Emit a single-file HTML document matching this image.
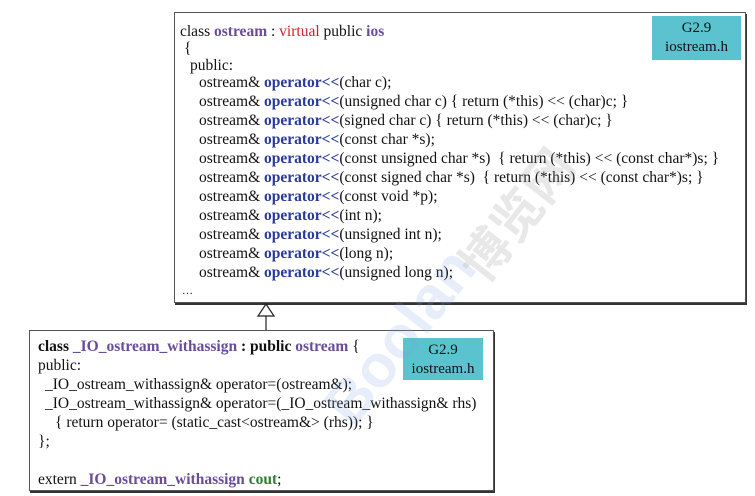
<!DOCTYPE html>
<html><head><meta charset="utf-8"><style>
body{margin:0;width:755px;height:496px;background:#fff;position:relative;overflow:hidden;font-family:"Liberation Serif",serif;font-size:15.5px;color:#111;}
.box{position:absolute;background:#fff;border:1px solid #555;box-shadow:1px 2px 0 #333;}
.l{position:absolute;white-space:pre;line-height:19px;letter-spacing:0}
.op{color:#2a3a9a;font-weight:bold}
.pu{color:#6a4c9c;font-weight:bold}
.rd{color:#d0202a}
.gr{color:#2e7d32;font-weight:bold}
.tag{position:absolute;background:#5bc3cf;text-align:center;line-height:19px;font-size:15px;color:#111}
.wm{position:absolute;color:rgba(120,160,220,0.18);font-family:"Liberation Sans",sans-serif;font-weight:bold;transform:rotate(-52deg);transform-origin:left top}
</style></head><body>
<div class="box" style="left:174px;top:12px;width:570px;height:289px"></div>
<div class="tag" style="left:652px;top:16px;width:89px;height:44px;padding-top:3px;box-sizing:border-box">G2.9<br>iostream.h</div>
<div class="l" style="left:180px;top:22px">class <span class="pu">ostream</span> : <span class="rd">virtual</span> public <span class="pu">ios</span></div>
<div class="l" style="left:184px;top:39px">{</div>
<div class="l" style="left:190px;top:56px">public:</div>
<div class="l" style="left:199px;top:73px">ostream&amp; <span class="op">operator&lt;&lt;</span>(char c);</div>
<div class="l" style="left:199px;top:92px">ostream&amp; <span class="op">operator&lt;&lt;</span>(unsigned char c) { return (*this) &lt;&lt; (char)c; }</div>
<div class="l" style="left:199px;top:111px">ostream&amp; <span class="op">operator&lt;&lt;</span>(signed char c) { return (*this) &lt;&lt; (char)c; }</div>
<div class="l" style="left:199px;top:130px">ostream&amp; <span class="op">operator&lt;&lt;</span>(const char *s);</div>
<div class="l" style="left:199px;top:149px">ostream&amp; <span class="op">operator&lt;&lt;</span>(const unsigned char *s)  { return (*this) &lt;&lt; (const char*)s; }</div>
<div class="l" style="left:199px;top:168px">ostream&amp; <span class="op">operator&lt;&lt;</span>(const signed char *s)  { return (*this) &lt;&lt; (const char*)s; }</div>
<div class="l" style="left:199px;top:187px">ostream&amp; <span class="op">operator&lt;&lt;</span>(const void *p);</div>
<div class="l" style="left:199px;top:206px">ostream&amp; <span class="op">operator&lt;&lt;</span>(int n);</div>
<div class="l" style="left:199px;top:225px">ostream&amp; <span class="op">operator&lt;&lt;</span>(unsigned int n);</div>
<div class="l" style="left:199px;top:244px">ostream&amp; <span class="op">operator&lt;&lt;</span>(long n);</div>
<div class="l" style="left:199px;top:263px">ostream&amp; <span class="op">operator&lt;&lt;</span>(unsigned long n);</div>
<div class="l" style="left:182px;top:282px;font-size:11px">…</div>
<svg style="position:absolute;left:255px;top:302px" width="24" height="30"><polygon points="11,2 3,14 19,14" fill="#fff" stroke="#222" stroke-width="1.2"/><line x1="11" y1="14" x2="11" y2="30" stroke="#222" stroke-width="1.2"/></svg>
<div class="box" style="left:29px;top:330px;width:463px;height:159px"></div>
<div class="tag" style="left:403px;top:338px;width:80px;height:42px;padding-top:3px;box-sizing:border-box">G2.9<br>iostream.h</div>
<div class="l" style="left:38px;top:337px"><b>class <span class="pu">_IO_ostream_withassign</span> : public <span style="color:#6a4c9c">ostream</span></b> {</div>
<div class="l" style="left:38px;top:356px">public:</div>
<div class="l" style="left:45px;top:375px">_IO_ostream_withassign&amp; operator=(ostream&amp;);</div>
<div class="l" style="left:45px;top:394px">_IO_ostream_withassign&amp; operator=(_IO_ostream_withassign&amp; rhs)</div>
<div class="l" style="left:55px;top:413px">{ return operator= (static_cast&lt;ostream&amp;&gt; (rhs)); }</div>
<div class="l" style="left:38px;top:432px">};</div>
<div class="l" style="left:38px;top:470px">extern <span class="pu">_IO_ostream_withassign</span> <span class="gr">cout</span>;</div>
<div class="wm" style="left:310px;top:395px;font-size:60px">Boolan</div>
<div class="wm" style="left:440px;top:250px;font-size:50px;font-family:'Noto Sans CJK SC',sans-serif;color:rgba(150,150,150,0.22)">博览网</div>
</body></html>
